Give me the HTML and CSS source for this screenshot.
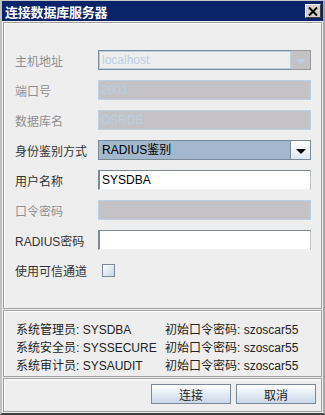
FILE: index.html
```html
<!DOCTYPE html>
<html>
<head>
  <meta charset="utf-8">
  <title>连接数据库服务器</title>
  <link rel="stylesheet" href="styles.css">
</head>
<body>
  <div class="window">
    <div class="titlebar">
      <span class="title">连接数据库服务器</span>
      <span class="close">
        <svg width="10" height="9" viewBox="0 0 10 9"><path d="M1 0.5 L9 8.5 M9 0.5 L1 8.5" stroke="#000" stroke-width="2"/></svg>
      </span>
    </div>

    <div class="panel form">
      <label class="label disabled">主机地址</label>
      <div class="combo disabled">
        <div class="combo-text">localhost</div>
        <div class="combo-arrow"><span class="tri"></span></div>
      </div>

      <label class="label disabled">端口号</label>
      <div class="field disabled">2003</div>

      <label class="label disabled">数据库名</label>
      <div class="field disabled">OSRDB</div>

      <label class="label">身份鉴别方式</label>
      <div class="combo">
        <div class="combo-text">RADIUS鉴别</div>
        <div class="combo-arrow"><span class="tri"></span></div>
      </div>

      <label class="label">用户名称</label>
      <div class="field">SYSDBA</div>

      <label class="label disabled">口令密码</label>
      <div class="field disabled"></div>

      <label class="label">RADIUS密码</label>
      <div class="field"></div>

      <label class="label">使用可信通道</label>
      <div class="check-cell"><span class="checkbox"></span></div>
    </div>

    <div class="panel accounts">
      <span>系统管理员: SYSDBA</span><span>初始口令密码: szoscar55</span>
      <span>系统安全员: SYSSECURE</span><span>初始口令密码: szoscar55</span>
      <span>系统审计员: SYSAUDIT</span><span>初始口令密码: szoscar55</span>
    </div>

    <div class="panel buttons">
      <button class="btn">连接</button>
      <button class="btn">取消</button>
    </div>
  </div>
</body>
</html>
```

FILE: styles.css
```css
body {
  margin: 0;
  width: 325px;
  height: 415px;
  font-family: "Liberation Sans", "Noto Sans CJK SC", sans-serif;
  font-size: 12px;
  color: #333333;
  background: #eeeeee;
}

.window {
  width: 325px;
  height: 415px;
  box-sizing: border-box;
  display: flex;
  flex-direction: column;
  background: #eeeeee;
  border-top: 1px solid #c8c8c8;
  border-left: 2px solid #c0c0c0;
  border-right: 2px solid #a8a8a8;
  border-bottom: 2px solid #404040;
  padding: 0 1px 1px 1px;
}

.titlebar {
  height: 20px;
  margin: 0 -1px;
  background: #0a246a;
  display: flex;
  align-items: center;
  justify-content: space-between;
  padding: 0 2px 0 3px;
}

.title {
  color: #fff;
  font-family: "Noto Sans CJK SC", sans-serif;
  font-weight: bold;
  font-size: 13px;
  letter-spacing: -0.2px;
}

.close {
  width: 16px;
  height: 14px;
  box-sizing: border-box;
  background: #d4d0c8;
  border: 1px solid;
  border-color: #ffffff #404040 #404040 #ffffff;
  display: flex;
  align-items: center;
  justify-content: center;
}

.panel {
  border: 1px solid #a0a0a0;
  box-shadow: inset 1px 1px 0 #ffffff;
  margin-top: 1px;
}

/* connection form */
.form {
  height: 287px;
  box-sizing: border-box;
  padding: 27px 10px 0 11px;
  display: grid;
  grid-template-columns: 83px 1fr;
  grid-auto-rows: 20px;
  row-gap: 10px;
  align-items: center;
}

.label {
  color: #333333;
  white-space: nowrap;
}

.label.disabled {
  color: #8e8e8e;
}

.field {
  height: 20px;
  box-sizing: border-box;
  background: #ffffff;
  border: 1px solid;
  border-color: #7a8a99 #c0c0c0 #f0f0f0 #7a8a99;
  border-left-width: 2px;
  padding: 0 2px;
  line-height: 18px;
  color: #000;
}

.field.disabled {
  background: #c4c2c4;
  border: 1px solid #b8cfe5;
  color: #b8cfe5;
}

.combo {
  height: 20px;
  display: flex;
  box-sizing: border-box;
  border: 1px solid #7a8a99;
}

.combo-text {
  flex: 1;
  background: #a3b8cc;
  color: #000;
  line-height: 18px;
  padding-left: 3px;
}

.combo-arrow {
  width: 19px;
  background: linear-gradient(#ffffff, #dde6ef);
  border-left: 1px solid #7a8a99;
  display: flex;
  align-items: center;
  justify-content: center;
}

.tri {
  width: 0;
  height: 0;
  border-left: 5px solid transparent;
  border-right: 5px solid transparent;
  border-top: 5px solid #000;
  margin-top: 2px;
}

.combo.disabled {
  border-color: #7a8a99;
}

.combo.disabled .combo-text {
  background: #eeeeee;
  color: #b8cfe5;
  border: 1px solid #b8cfe5;
  line-height: 16px;
  padding-left: 2px;
}

.combo.disabled .combo-arrow {
  background: #c4c2c4;
  border: 1px solid #999999;
  border-left: none;
  margin: -1px -1px -1px 0;
  width: 19px;
}

.combo.disabled .tri {
  border-top-color: #b8cfe5;
}

.check-cell {
  display: flex;
  align-items: center;
  padding-left: 4px;
}

.checkbox {
  width: 13px;
  height: 13px;
  box-sizing: border-box;
  border: 1px solid #7a8a99;
  background: linear-gradient(135deg, #ffffff, #c5d4e4);
}

/* default accounts */
.accounts {
  height: 67px;
  box-sizing: border-box;
  padding: 8px 0 0 12px;
  display: grid;
  grid-template-columns: 149px 1fr;
  grid-auto-rows: 18px;
  align-items: center;
  color: #222;
}

/* dialog buttons */
.buttons {
  flex: 1;
  display: flex;
  justify-content: flex-end;
  align-items: flex-start;
  gap: 5px;
  padding: 5px 5px 0 0;
}

.btn {
  width: 80px;
  height: 20px;
  font-family: "Liberation Sans", "Noto Sans CJK SC", sans-serif;
  font-size: 12px;
  color: #222;
  background: linear-gradient(#ffffff, #c9d7e8);
  border: 1px solid #7a8a99;
  padding: 0;
}
```
